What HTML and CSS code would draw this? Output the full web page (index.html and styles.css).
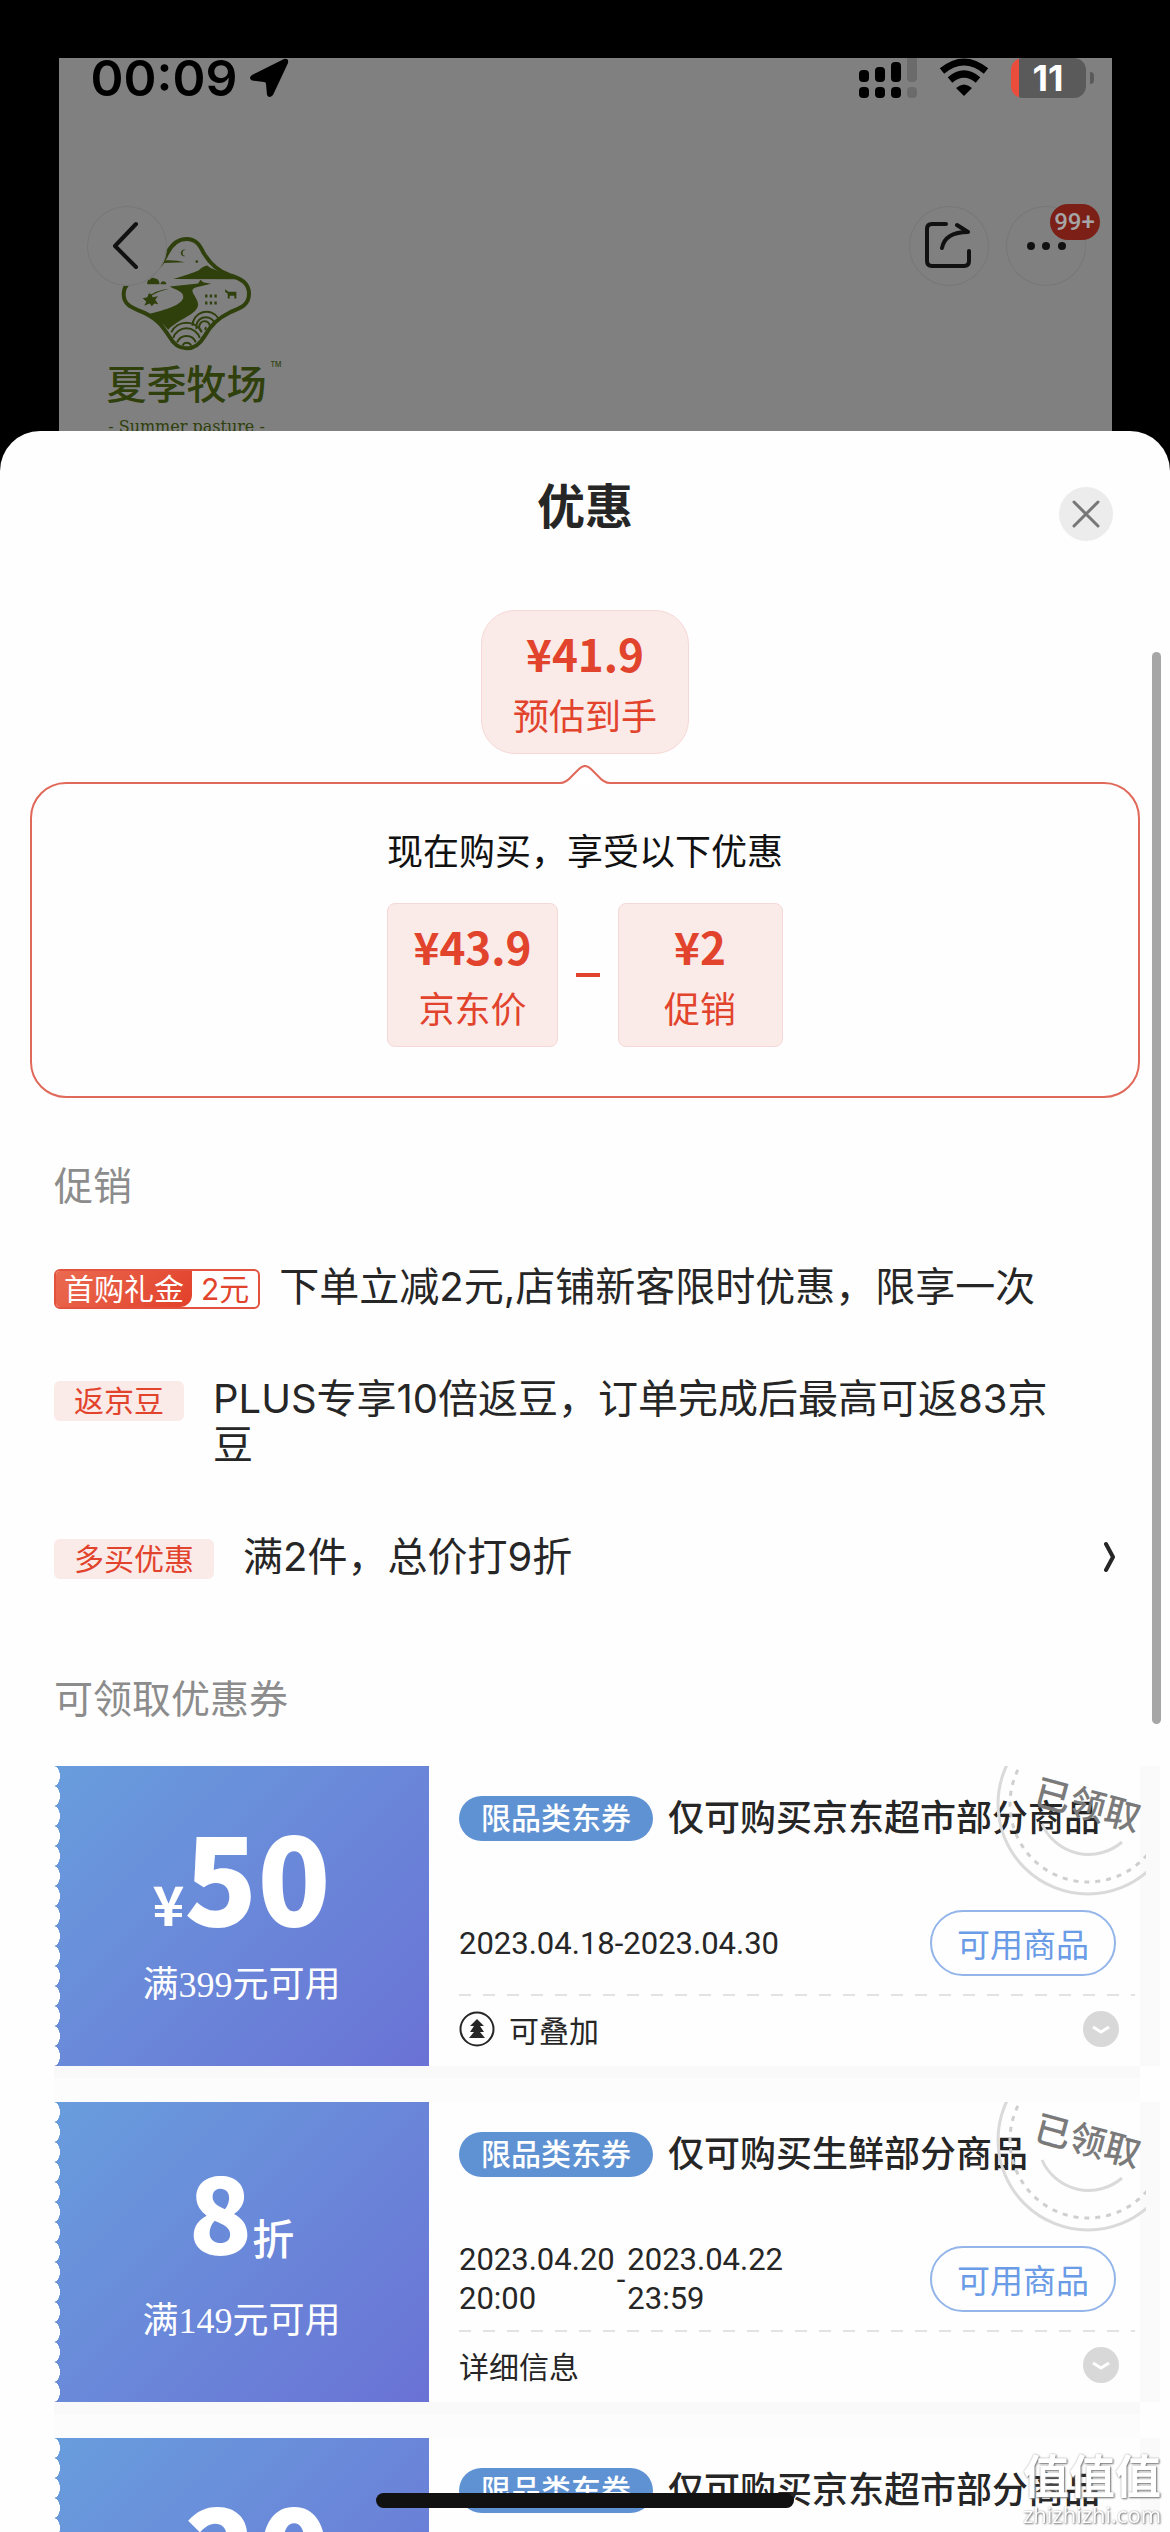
FILE: index.html
```html
<!DOCTYPE html>
<html lang="zh-CN">
<head>
  <meta charset="UTF-8" />
  <meta name="viewport" content="width=device-width, initial-scale=1" />
  <title>优惠</title>
  <link rel="stylesheet" href="styles.css">
</head>
<body>
  <!-- Dimmed product page behind the sheet -->
  <div class="backdrop">
    <div class="brand">
      <svg class="brand-mark" viewBox="120 135 400 355" aria-hidden="true">
        <path d="M320 147C290 147 274 166 262 190C246 222 236 238 200 255C165 270 131 275 131 313C131 350 165 356 195 370C235 390 248 410 268 440C280 462 295 476 320 476C348 476 362 460 374 440C395 405 415 385 450 368C480 354 508 348 508 312C508 280 485 266 450 256C415 244 390 220 372 190C360 166 350 147 320 147Z" fill="none" stroke="#2f400c" stroke-width="12"/>
        <g fill="#2f400c">
          <path d="M248 212Q285 209 315 217L248 219Z"/>
          <path d="M317 180a10 10 0 1 0 0 18a9 9 0 0 1 0-18z"/>
          <circle cx="351" cy="215" r="4"/>
          <path d="M280 267Q345 248 358 240Q372 228 382 227Q395 238 408 240Q440 255 475 268Z"/>
          <path d="M202 283q-2-12 8-14q6-9 16-3q12 2 13 17zM242 283q0-9 9-9q9 2 8 9z"/>
          <path d="M270 290L355 281L362 270L370 277L394 282L350 292C320 300 355 320 355 345C352 375 300 385 265 420C248 398 225 385 202 374C245 362 300 350 310 325C314 304 285 300 270 290Z"/>
          <path d="M188 325l14-3 5-12 8 3 3 9 16-3-8 11 9 13-12-2-7 8-7-8-16 7 6-13z"/>
          <path d="M214 314Q235 300 268 297Q235 305 214 318z"/>
          <path d="M436 298l10 8h24v20h-6v-8h-14v8h-6v-14l-8-6z"/>
          <path d="M376 314h7v9h-7zM390 314h7v9h-7zM404 314h7v9h-7zM376 335h7v9h-7zM390 335h7v9h-7zM404 335h7v9h-7z"/>
        </g>
        <g fill="none" stroke="#2f400c" stroke-width="6">
          <path d="M338 408a42 42 0 0 1 78-22M350 418a29 29 0 0 1 54-20M366 424a16 16 0 1 1 24-10M378 421a6 6 0 0 1 2-8"/>
          <path d="M274 428a51 51 0 0 1 92 0M280 445a42 42 0 0 1 80 0M292 458a30 30 0 0 1 56 0M308 468a14 14 0 0 1 26 0"/>
        </g>
      </svg>
      <div class="brand-name">夏季牧场<sup>TM</sup></div>
      <div class="brand-sub">- Summer pasture -</div>
    </div>

    <div class="status-bar">
      <span class="time">00:09</span>
      <svg class="locate" width="40" height="40" viewBox="0 0 40 40"><path d="M35 1L3 17Q-1 20 3 22.500L15 24Q17 24 17 26L18 37Q20 41 24 37L39 5Q40 0 35 1Z"/></svg>
      <svg class="signal" width="60" height="40" viewBox="0 0 60 40">
        <g><rect y="12" width="10" height="12" rx="4"/><rect x="16" y="9" width="10" height="15" rx="4"/><rect x="32" y="4" width="10" height="20" rx="4"/>
        <rect y="29" width="10" height="11" rx="4"/><rect x="16" y="29" width="10" height="11" rx="4"/><rect x="32" y="29" width="10" height="11" rx="4"/></g>
        <g fill="#6b6b6b"><path d="M48 0H58V20Q58 24 53 24Q48 24 48 20Z"/><rect x="48" y="29" width="10" height="11" rx="4"/></g>
      </svg>
      <svg class="wifi" width="50" height="40" viewBox="0 0 50 40">
        <path d="M3 13Q25 -5 47 13" fill="none" stroke="#000" stroke-width="7"/>
        <path d="M11 22Q25 10 39 22" fill="none" stroke="#000" stroke-width="7"/>
        <path d="M17 30Q25 23 33 30L25 38Z"/>
      </svg>
      <span class="battery">11</span>
    </div>

    <div class="nav">
      <button class="round" aria-label="返回">
        <svg width="80" height="80" viewBox="0 0 80 80"><path d="M49 18L28 40L49 61" /></svg>
      </button>
      <button class="round share" aria-label="分享">
        <svg width="80" height="80" viewBox="0 0 80 80"><path d="M37 18H23Q18 18 18 23V55Q18 60 23 60H55Q60 60 60 55V45M33 42Q36 26 59 26M48 19L59 26"/></svg>
      </button>
      <button class="round" aria-label="更多">
        <svg width="80" height="80" viewBox="0 0 80 80"><g class="dots"><circle cx="25" cy="40" r="4"/><circle cx="40" cy="40" r="4"/><circle cx="56" cy="40" r="4"/></g></svg>
        <span class="badge">99+</span>
      </button>
    </div>
  </div>

  <main class="sheet">
    <header class="sheet-head">
      <h1>优惠</h1>
      <button class="close" aria-label="关闭">
        <svg width="54" height="54" viewBox="0 0 54 54"><path d="M15 15L39 39M39 15L15 39"/></svg>
      </button>
    </header>

    <div class="price final">
      <strong>¥41.9</strong>
      <span>预估到手</span>
    </div>

    <section class="callout">
      <svg class="callout-tip" width="50" height="20" viewBox="0 0 50 20"><path d="M0 18Q6 18 12 11L19 4Q25 -2 31 4L38 11Q44 18 50 18V20H0Z" fill="#fff"/><path d="M0 18Q6 18 12 11L19 4Q25 -2 31 4L38 11Q44 18 50 18" fill="none" stroke="#e1695a" stroke-width="2"/></svg>
      <p>现在购买，享受以下优惠</p>
      <div class="formula">
        <div class="price"><strong>¥43.9</strong><span>京东价</span></div>
        <i class="minus"></i>
        <div class="price"><strong>¥2</strong><span>促销</span></div>
      </div>
    </section>

    <section class="promos">
      <h2>促销</h2>
      <ul>
        <li class="first-buy">
          <span class="tag-split"><b>首购礼金</b><em>2元</em></span>
          <p>下单立减2元,店铺新客限时优惠，限享一次</p>
        </li>
        <li>
          <span class="tag">返京豆</span>
          <p>PLUS专享10倍返豆，订单完成后最高可返83京豆</p>
        </li>
        <li>
          <span class="tag">多买优惠</span>
          <p>满2件，总价打9折</p>
          <svg class="more" width="12" height="34" viewBox="0 0 12 34"><path d="M2 4L9 17L2 30"/></svg>
        </li>
      </ul>
    </section>

    <section class="coupons">
      <h2>可领取优惠券</h2>
      <div class="coupon-list">
        <article class="coupon">
          <div class="value">
            <div class="amount"><small>¥</small>50</div>
            <div class="limit">满399元可用</div>
          </div>
          <div class="detail">
            <div class="title"><span class="kind">限品类东券</span><h3>仅可购买京东超市部分商品</h3></div>
            <div class="use">
              <div class="dates"><span>2023.04.18-2023.04.30</span></div>
              <button class="goods">可用商品</button>
            </div>
            <div class="foot">
              <svg class="stack" width="36" height="36" viewBox="0 0 36 36"><circle cx="18" cy="18" r="16.500" fill="none" stroke="#262626" stroke-width="2"/><path d="M18 8L25 15H21L25 21H21L26 27H10L15 21H11L15 15H11Z" fill="#262626"/></svg>
              <span>可叠加</span>
              <button class="expand" aria-label="展开"><svg width="36" height="36" viewBox="0 0 36 36"><path d="M10 16L18 21L26 16"/></svg></button>
            </div>
          </div>
          <svg class="stamp" width="150" height="130" viewBox="0 0 150 130">
            <circle cx="92" cy="38" r="90" stroke="#dadada" stroke-width="3"/>
            <circle cx="92" cy="38" r="78" stroke="#cfcfcf" stroke-width="3" stroke-dasharray="5 6"/>
            <path d="M46 58A51 51 0 0 0 126 76" stroke="#dadada" stroke-width="3"/>
            <text x="92" y="52" transform="rotate(15 92 38)">已领取</text>
          </svg>
        </article>

        <article class="coupon">
          <div class="value">
            <div class="amount discount">8<small>折</small></div>
            <div class="limit">满149元可用</div>
          </div>
          <div class="detail">
            <div class="title"><span class="kind">限品类东券</span><h3>仅可购买生鲜部分商品</h3></div>
            <div class="use">
              <div class="dates"><span>2023.04.20<br>20:00</span><span>-</span><span>2023.04.22<br>23:59</span></div>
              <button class="goods">可用商品</button>
            </div>
            <div class="foot">
              <span>详细信息</span>
              <button class="expand" aria-label="展开"><svg width="36" height="36" viewBox="0 0 36 36"><path d="M10 16L18 21L26 16"/></svg></button>
            </div>
          </div>
          <svg class="stamp" width="150" height="130" viewBox="0 0 150 130">
            <circle cx="92" cy="38" r="90" stroke="#dadada" stroke-width="3"/>
            <circle cx="92" cy="38" r="78" stroke="#cfcfcf" stroke-width="3" stroke-dasharray="5 6"/>
            <path d="M46 58A51 51 0 0 0 126 76" stroke="#dadada" stroke-width="3"/>
            <text x="92" y="52" transform="rotate(15 92 38)">已领取</text>
          </svg>
        </article>

        <article class="coupon">
          <div class="value">
            <div class="amount"><small>¥</small>20</div>
          </div>
          <div class="detail">
            <div class="title"><span class="kind">限品类东券</span><h3>仅可购买京东超市部分商品</h3></div>
          </div>
        </article>
      </div>
    </section>

    <div class="scrollbar"></div>
  </main>

  <div class="watermark"><b>值值值</b><span>zhizhizhi.com</span></div>
  <div class="home-bar"></div>
</body>
</html>
```
FILE: styles.css
```css
* {
  box-sizing: border-box;
}
body {
  margin: 0;
  height: 100vh;
  padding-top: 58px;
  display: flex;
  flex-direction: column;
  overflow: hidden;
  background: #000;
  color: #262626;
  font-family: Inter, "Noto Sans CJK SC", sans-serif;
}
h1, h2, h3, p, ul {
  margin: 0;
  padding: 0;
  list-style: none;
}
button {
  padding: 0;
  border: none;
  background: none;
  font-family: inherit;
  cursor: pointer;
}
svg {
  display: block;
  flex: none;
}

/* Page behind */
.backdrop {
  position: relative;
  flex: none;
  height: 373px;
  margin: 0 5%;
  overflow: hidden;
  background: #808080;
}
.status-bar {
  position: relative;
  display: flex;
  align-items: center;
  height: 40px;
  padding: 0 20px 0 32px;
  color: #000;
}
.time {
  font-size: 50px;
  font-weight: 600;
  line-height: 40px;
}
.locate {
  margin-left: 12px;
}
.signal {
  margin-left: auto;
}
.wifi {
  margin: 0 22px 0 20px;
}
.battery {
  position: relative;
  width: 75px;
  height: 40px;
  margin-right: 6px;
  border-radius: 12px;
  background: linear-gradient(90deg, #eb4d3d 8px, #5a5a5a 8px);
  color: #fff;
  font-size: 36px;
  font-weight: 700;
  line-height: 40px;
  text-align: center;
}
.battery::after {
  content: "";
  position: absolute;
  left: 79px;
  top: 14px;
  width: 4px;
  height: 12px;
  border-radius: 0 4px 4px 0;
  background: #5a5a5a;
}
.nav {
  position: relative;
  display: flex;
  gap: 17px;
  margin-top: 108px;
  padding: 0 26px 0 28px;
}
.round {
  position: relative;
  width: 80px;
  height: 80px;
  border-radius: 50%;
  background: #808080;
  box-shadow: inset 0 0 0 1px #777;
}
.round path {
  fill: none;
  stroke: #111;
  stroke-width: 4;
  stroke-linecap: round;
  stroke-linejoin: round;
}
.dots {
  fill: #111;
}
.share {
  margin-left: auto;
}
.badge {
  position: absolute;
  left: 44px;
  top: -2px;
  width: 50px;
  height: 36px;
  border-radius: 18px;
  background: #7c1f17;
  color: #a5a5a5;
  font: 500 24px/36px Roboto, sans-serif;
}
.brand {
  position: absolute;
  left: 48px;
  top: 177px;
  display: flex;
  flex-direction: column;
  align-items: center;
  color: #2f400c;
}
.brand-mark {
  width: 133px;
  height: 118px;
}
.brand-name {
  position: relative;
  margin-top: 8px;
  font-size: 40px;
  font-weight: 500;
  line-height: 48px;
}
.brand-name sup {
  position: absolute;
  left: 164px;
  top: 0;
  font-size: 7px;
  line-height: 8px;
}
.brand-sub {
  margin-top: 6px;
  font: 16px/24px "DejaVu Serif", serif;
  white-space: nowrap;
}

/* Bottom sheet */
.sheet {
  position: relative;
  flex: 1;
  min-height: 0;
  padding-top: 48px;
  overflow: hidden;
  border-radius: 40px 40px 0 0;
  background: #fefefe;
}
.sheet-head {
  display: grid;
  grid-template-columns: 1fr auto 1fr;
  align-items: end;
  height: 62px;
  padding: 0 57px;
}
h1 {
  grid-column: 2;
  align-self: start;
  font-size: 48px;
  font-weight: 700;
  line-height: 56px;
}
.close {
  justify-self: end;
  border-radius: 50%;
  background: #ececec;
}
.close path {
  stroke: #777;
  stroke-width: 3;
  stroke-linecap: round;
}
.price {
  display: flex;
  flex-direction: column;
  align-items: center;
  gap: 16px;
  min-width: 165px;
  padding: 18px 25px 12px;
  border: 1px solid #f6d9d7;
  border-radius: 8px;
  background: #faeae8;
  color: #e2432c;
  font-size: 36px;
  line-height: 48px;
}
.price strong {
  font-family: "Noto Sans CJK SC", sans-serif;
  font-size: 44px;
}
.final {
  width: 208px;
  margin: 69px auto 0;
  border-radius: 34px;
}
.callout {
  position: relative;
  margin: 28px 30px 0;
  padding: 44px 0 49px;
  border: 2px solid #e1695a;
  border-radius: 36px;
}
.callout-tip {
  position: absolute;
  left: 50%;
  top: -19px;
  margin-left: -25px;
}
.callout p {
  color: #111;
  font-size: 36px;
  line-height: 48px;
  text-align: center;
}
.formula {
  display: flex;
  justify-content: center;
  align-items: center;
  gap: 18px;
  margin-top: 27px;
}
.minus {
  width: 24px;
  height: 4px;
  background: #e2432c;
}
h2 {
  color: #8c8c8c;
  font-size: 39px;
  font-weight: 400;
  line-height: 48px;
}

/* Promotions */
.promos {
  margin-top: 64px;
  padding: 0 54px;
}
.promos ul {
  display: flex;
  flex-direction: column;
  gap: 66px;
  margin-top: 54px;
}
.promos li {
  display: flex;
  align-items: flex-start;
  gap: 29px;
}
.promos .first-buy {
  gap: 19px;
}
.promos p {
  flex: 1;
  padding-right: 44px;
  font-size: 40px;
  line-height: 46px;
}
.tag,
.tag-split {
  flex: none;
  height: 40px;
  margin-top: 5px;
  border-radius: 6px;
  color: #e2432c;
  font-size: 30px;
  line-height: 40px;
}
.tag {
  padding: 0 20px;
  background: #faeae8;
}
.tag-split {
  display: flex;
  overflow: hidden;
  border: 2px solid #e2523f;
  line-height: 36px;
}
.tag-split b {
  padding: 0 8px;
  border-radius: 0 0 12px 0;
  background: linear-gradient(135deg, #ea6a50, #e2402a);
  color: #fff;
  font-weight: 400;
}
.tag-split em {
  padding: 0 9px;
  font-style: normal;
}
.more {
  margin-top: 6px;
}
.more path {
  fill: none;
  stroke: #262626;
  stroke-width: 4;
  stroke-linecap: round;
  stroke-linejoin: round;
}

/* Coupons */
.coupons {
  margin-top: 95px;
  padding: 0 30px 0 54px;
}
.coupon-list {
  display: flex;
  flex-direction: column;
  gap: 36px;
  margin-top: 43px;
  background: #fcfcfc;
}
.coupon {
  position: relative;
  display: flex;
  height: 300px;
  background: #fefefe;
  box-shadow: 0 12px 0 #f9f9fa, 20px 0 0 #fafafa;
}
.value {
  flex: none;
  width: 375px;
  padding-top: 38px;
  background:
    radial-gradient(ellipse 6px 10px at 0 50%, #fefefe 95%, transparent) 0 0 / 8px 20px repeat-y,
    linear-gradient(135deg, #689ddd, #6a88d9 50%, #6a72d5);
  color: #fff;
  text-align: center;
}
.amount {
  height: 124px;
  font-family: "Noto Sans CJK SC", sans-serif;
  font-size: 120px;
  font-weight: 900;
  line-height: 140px;
}
.amount small {
  font-size: 54px;
  font-weight: 700;
}
.discount {
  font-size: 104px;
}
.discount small {
  font-size: 42px;
  font-weight: 500;
}
.limit {
  margin-top: 33px;
  font: 36px/48px "Liberation Serif", "Noto Sans CJK SC", serif;
}
.detail {
  flex: 1;
  min-width: 0;
  padding: 30px 5px 0 30px;
}
.title {
  display: flex;
  align-items: center;
  gap: 15px;
  height: 45px;
  white-space: nowrap;
}
.kind {
  padding: 0 22px;
  border-radius: 23px;
  background: #5f92d3;
  color: #fff;
  font-size: 30px;
  font-weight: 500;
  line-height: 45px;
}
h3 {
  font-size: 36px;
  font-weight: 500;
  line-height: 45px;
}
.use {
  display: flex;
  justify-content: space-between;
  align-items: center;
  height: 78px;
  margin: 63px 19px 12px 0;
}
.dates {
  display: flex;
  align-items: center;
  gap: 2px;
  font: 31px/39px Roboto, sans-serif;
}
.goods {
  width: 186px;
  height: 66px;
  border: 2px solid #94b5ea;
  border-radius: 33px;
  color: #6a9be6;
  font-size: 33px;
}
.foot {
  display: flex;
  align-items: center;
  gap: 14px;
  height: 70px;
  padding-right: 16px;
  background: repeating-linear-gradient(90deg, #e2e2e2 0 12px, transparent 12px 24px) 0 0 / 100% 2px no-repeat;
  font-size: 30px;
}
.expand {
  margin-left: auto;
  border-radius: 50%;
  background: #d8d8d8;
}
.expand path {
  fill: none;
  stroke: #fff;
  stroke-width: 3;
}
.stamp {
  position: absolute;
  right: -6px;
  top: 0;
  overflow: hidden;
}
.stamp circle,
.stamp path {
  fill: none;
}
.stamp text {
  fill: #7a7a7a;
  font-size: 36px;
  font-weight: 500;
  text-anchor: middle;
}

/* Overlays */
.scrollbar {
  position: absolute;
  right: 9px;
  top: 221px;
  width: 9px;
  height: 51%;
  border-radius: 5px;
  background: #a6a6a6;
}
.home-bar {
  position: fixed;
  left: 50%;
  bottom: 24px;
  width: 418px;
  height: 15px;
  margin-left: -209px;
  border-radius: 8px;
  background: #111;
}
.watermark {
  position: fixed;
  right: 9px;
  bottom: 6px;
  display: flex;
  flex-direction: column;
  align-items: center;
  color: #fff;
  text-shadow: 1px 1px 2px #777, 0 0 2px #aaa;
}
.watermark b {
  font-size: 46px;
  line-height: 52px;
}
.watermark span {
  font: 22px/24px "Open Sans", sans-serif;
}
```
